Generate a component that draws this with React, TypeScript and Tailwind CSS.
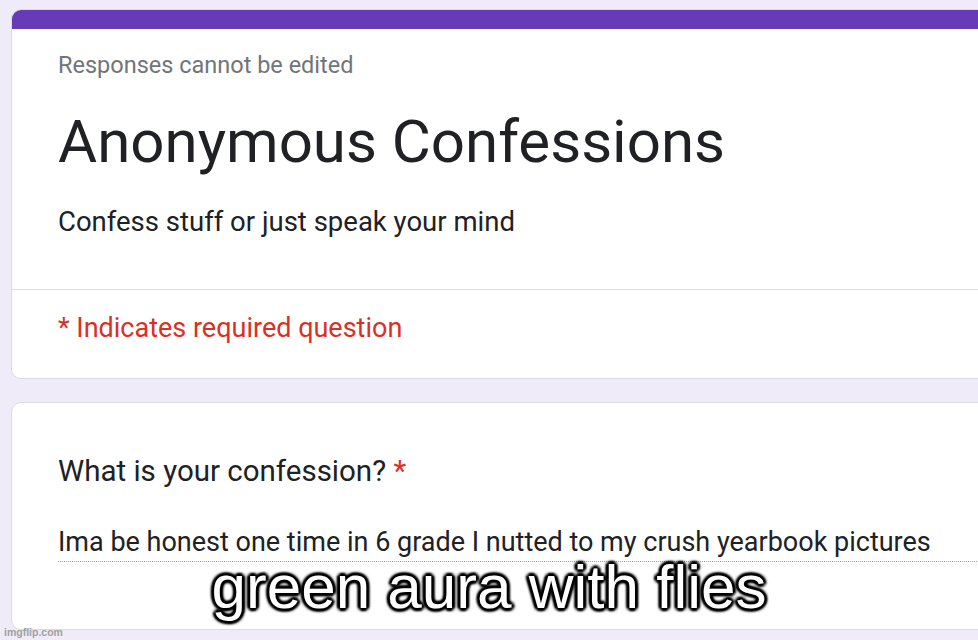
const roboto = "font-['Roboto',_'Liberation_Sans',_sans-serif]"

export default function App() {
  return (
    <div className={`relative w-[978px] h-[640px] overflow-hidden bg-[#f0ebf8] ${roboto}`}>
      <div className="flex flex-col gap-[23px] pl-[11px] pt-[9px] w-[1010px]">
        {/* Header card */}
        <div className="rounded-[10px] bg-white border border-[#dadce0] overflow-hidden">
          <div className="h-[19px] bg-[#673ab7]" />
          <div className="px-[46px] pt-[20px] pb-[49px]">
            <p className="text-[23.5px] leading-[32px] text-[#70757a]">Responses cannot be edited</p>
            <h1 className="mt-[25px] text-[60px] leading-[72px] text-[#202124]">Anonymous Confessions</h1>
            <p className="mt-[26px] text-[27.5px] leading-[36px] text-[#202124]">Confess stuff or just speak your mind</p>
          </div>
          <div className="border-t border-[#dadce0] px-[46px] pt-[20px] pb-[32px]">
            <p className="text-[27px] leading-[36px] text-[#d93025]">* Indicates required question</p>
          </div>
        </div>

        {/* Question card */}
        <div className="h-[228px] rounded-[10px] bg-white border border-[#dadce0] pl-[46px] pt-[48px]">
          <p className="text-[29.5px] leading-[40px] text-[#202124]">
            What is your confession? <span className="text-[#d93025]">*</span>
          </p>
          <div className="mt-[33px] pb-[1px] border-b border-dotted border-[#9aa0a6]">
            <p className="text-[27px] leading-[36px] text-[#202124]">
              Ima be honest one time in 6 grade I nutted to my crush yearbook pictures
            </p>
          </div>
        </div>
      </div>

      {/* Caption overlay */}
      <div className="absolute left-0 right-0 top-[551px] text-center font-['Liberation_Sans',_Arial,_sans-serif] text-[62px] leading-[72px] text-white [text-shadow:0_0_2px_#000,3px_0_2px_#000,-3px_0_2px_#000,0_3px_2px_#000,0_-3px_2px_#000,2px_2px_3px_#000,-2px_-2px_3px_#000,2px_-2px_3px_#000,-2px_2px_3px_#000]">
        green aura with flies
      </div>

      <div className="absolute left-[4px] top-[626px] font-['Liberation_Sans',_Arial,_sans-serif] text-[10.5px] font-bold leading-[12px] text-[#a0a0a0]">
        imgflip.com
      </div>
    </div>
  )
}
